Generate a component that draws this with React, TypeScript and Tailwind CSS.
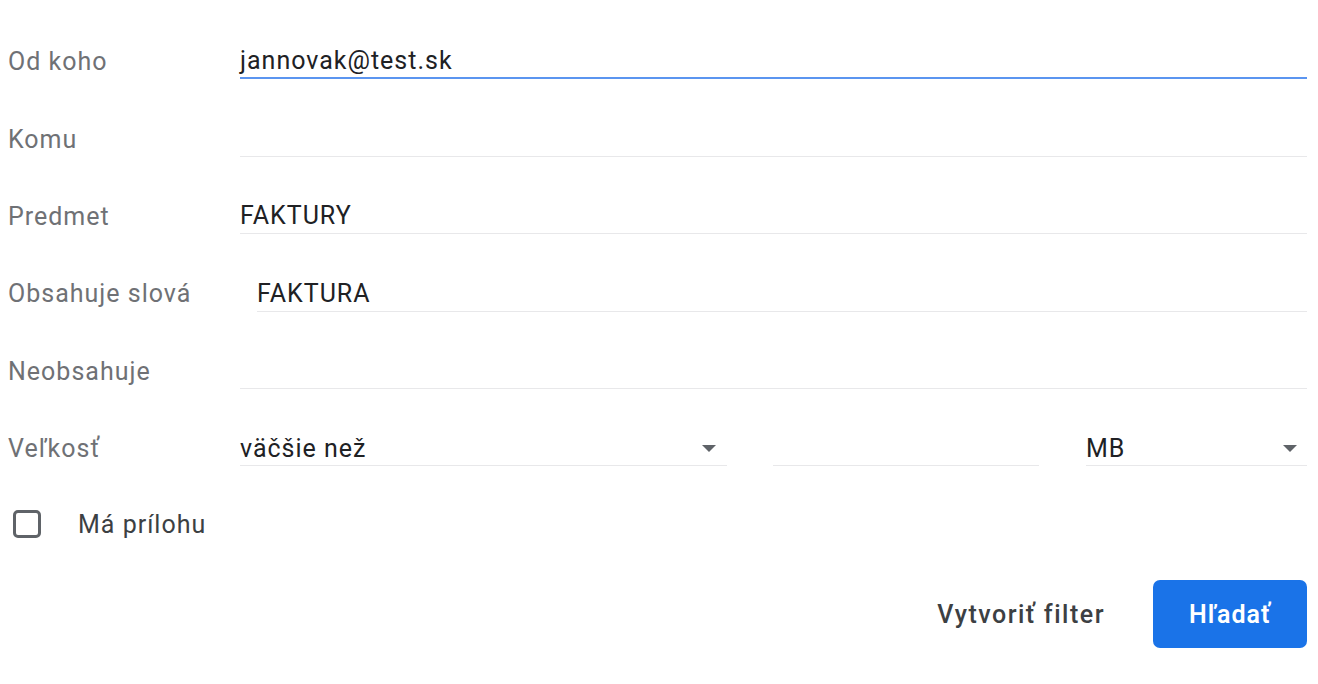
const font = { fontFamily: "Roboto, 'Liberation Sans', Arial, sans-serif" };

function Field({
  label,
  value,
  active,
  labelWidth = "w-[232px]",
}: {
  label: string;
  value?: string;
  active?: boolean;
  labelWidth?: string;
}) {
  return (
    <div className="flex h-[77.4px] items-end">
      <div className={`${labelWidth} flex h-[35px] shrink-0 items-center text-[25px] tracking-[1px] text-[#6f7175]`}>
        {label}
      </div>
      <div
        className={`flex h-[35px] flex-1 items-center text-[25px] tracking-[1px] text-[#202124] ${
          active ? "border-b-2 border-[#5b95f0]" : "border-b border-[#e8e8ea]"
        }`}
      >
        {value}
      </div>
    </div>
  );
}

function Caret() {
  return (
    <svg width="14" height="7" viewBox="0 0 14 7" className="shrink-0">
      <path d="M0 0h14L7 7z" fill="#5f6368" />
    </svg>
  );
}

export default function App() {
  return (
    <div className="min-h-screen w-[1318px] bg-white pl-[8px] pr-[11px] pt-[2px]" style={font}>
      <Field label="Od koho" value="jannovak@test.sk" active />
      <Field label="Komu" />
      <Field label="Predmet" value="FAKTURY" />
      <Field label="Obsahuje slová" value="FAKTURA" labelWidth="w-[249px]" />
      <Field label="Neobsahuje" />

      {/* Size row */}
      <div className="flex h-[77.4px] items-end">
        <div className="flex h-[35px] w-[232px] shrink-0 items-center text-[25px] tracking-[1px] text-[#6f7175]">
          Veľkosť
        </div>
        <div className="flex h-[35px] w-[487px] items-center justify-between border-b border-[#e8e8ea] pr-[11px] text-[25px] tracking-[1px] text-[#202124]">
          <span>väčšie než</span>
          <Caret />
        </div>
        <div className="ml-[46px] h-[35px] w-[266px] border-b border-[#e8e8ea]" />
        <div className="ml-[47px] flex h-[35px] flex-1 items-center justify-between border-b border-[#e8e8ea] pr-[10px] text-[25px] tracking-[1px] text-[#202124]">
          <span>MB</span>
          <Caret />
        </div>
      </div>

      {/* Attachment */}
      <div className="mt-[44px] flex h-[28px] items-center">
        <div className="ml-[5px] h-[28px] w-[28px] shrink-0 rounded-[5px] border-[3px] border-[#5f6368]" />
        <span className="ml-[37px] text-[25px] tracking-[1px] text-[#3c4043]">Má prílohu</span>
      </div>

      {/* Actions */}
      <div className="mt-[42px] flex items-center justify-end">
        <button className="text-[25px] font-medium tracking-[1.5px] text-[#3c4043]">Vytvoriť filter</button>
        <button className="ml-[48px] h-[68px] w-[154px] rounded-[7px] bg-[#1a73e8] text-[25px] font-semibold tracking-[1px] text-white">
          Hľadať
        </button>
      </div>
    </div>
  );
}
